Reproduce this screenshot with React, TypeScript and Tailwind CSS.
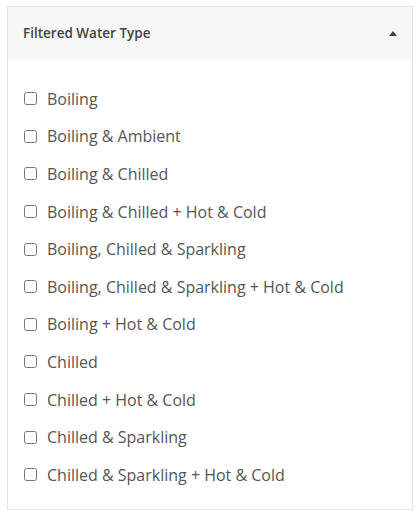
import React from "react";

const options = [
  "Boiling",
  "Boiling & Ambient",
  "Boiling & Chilled",
  "Boiling & Chilled + Hot & Cold",
  "Boiling, Chilled & Sparkling",
  "Boiling, Chilled & Sparkling + Hot & Cold",
  "Boiling + Hot & Cold",
  "Chilled",
  "Chilled + Hot & Cold",
  "Chilled & Sparkling",
  "Chilled & Sparkling + Hot & Cold",
];

export default function App() {
  return (
    <div className="w-[418px] h-[517px] bg-white pt-[6px] pl-[7px] font-['Open_Sans',sans-serif]">
      <div className="w-[406px] h-[504px] border border-[#e3e3e3] flex flex-col">
        <div className="h-[53px] bg-[#f7f7f7] flex items-center justify-between pl-[15px] pr-[15px]">
          <span className="text-[13.5px] font-semibold text-[#444]">Filtered Water Type</span>
          <svg width="8" height="5" viewBox="0 0 8 5">
            <path d="M0 5 L4 0 L8 5 Z" fill="#444" />
          </svg>
        </div>
        <ul className="pt-[20px] pl-[16px]">
          {options.map((o) => (
            <li key={o} className="h-[37.6px] flex items-center">
              <input type="checkbox" className="w-[13px] h-[13px] m-0 accent-[#555]" />
              <span className="ml-[10px] text-[16px] text-[#555]">{o}</span>
            </li>
          ))}
        </ul>
      </div>
    </div>
  );
}
